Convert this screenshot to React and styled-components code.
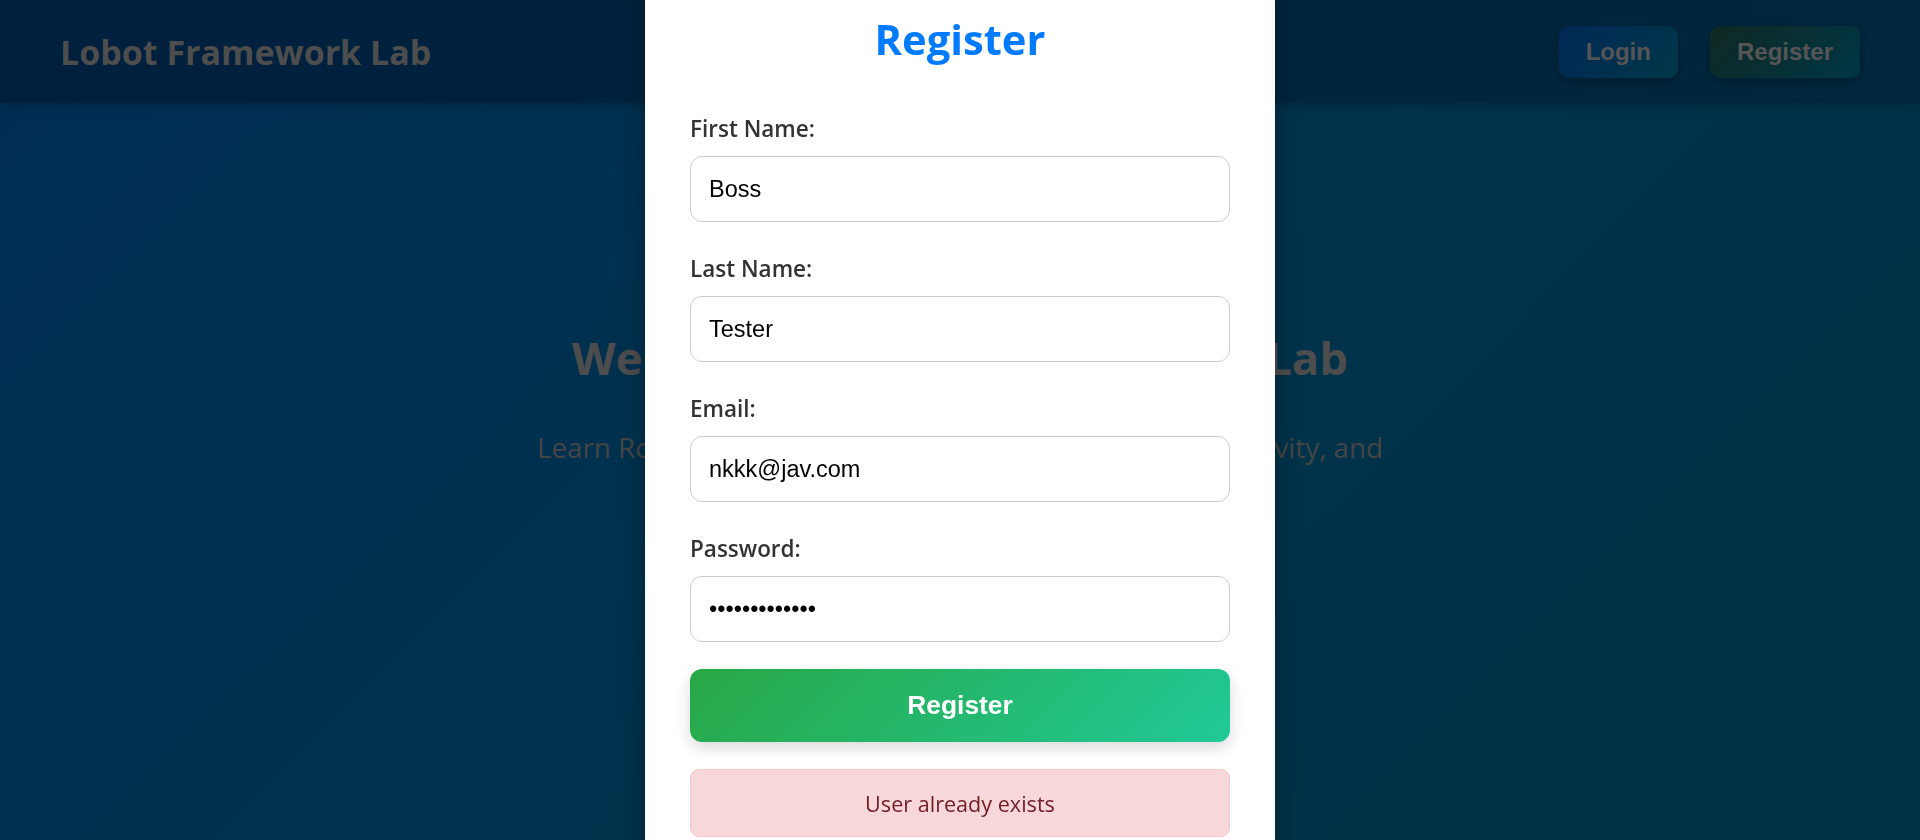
import React from "react";
import styled, { createGlobalStyle } from "styled-components";

const Global = createGlobalStyle`
  html, body {
    margin: 0;
    padding: 0;
    height: 100%;
    overflow: hidden;
  }
  body {
    font-family: "Open Sans", "Noto Sans", sans-serif;
  }
  * { box-sizing: border-box; }
`;

const Page = styled.div`
  min-height: 100vh;
  background: linear-gradient(135deg, #0062b8 0%, #0070aa 50%, #006c95 100%);
`;

const Header = styled.header`
  height: 103px;
  padding: 0 60px;
  display: flex;
  align-items: center;
  justify-content: space-between;
  background: linear-gradient(90deg, #004688 0%, #004f88 50%, #00588a 100%);
  box-shadow: 0 2px 10px rgba(0, 0, 0, 0.2);
`;

const Brand = styled.h1`
  margin: 0;
  font-family: "Open Sans", sans-serif;
  font-size: 34px;
  font-weight: 700;
  color: #acacac;
`;

const Nav = styled.nav`
  display: flex;
  gap: 32px;
`;

const NavButton = styled.button`
  height: 52px;
  padding: 0 27px;
  border: none;
  border-radius: 10px;
  font-family: "Liberation Sans", Arial, sans-serif;
  font-size: 24px;
  font-weight: 700;
  color: #bdbdbd;
  background: ${(p) =>
    p.$variant === "register"
      ? "linear-gradient(135deg, #21594e 0%, #007a9b 100%)"
      : "linear-gradient(135deg, #0059bd 0%, #007aa0 100%)"};
  box-shadow: 0 4px 12px rgba(0, 0, 0, 0.25);
`;

const Hero = styled.section`
  padding-top: 227px;
  display: flex;
  flex-direction: column;
  align-items: center;
  text-align: center;
`;

const HeroTitle = styled.h2`
  margin: 0;
  font-size: 45.5px;
  line-height: 1.2;
  font-weight: 700;
  color: #aaaaaa;
`;

const HeroText = styled.p`
  margin: 41px 0 0;
  font-size: 27.8px;
  line-height: 1.55;
  color: #9a9a9a;
`;

const Overlay = styled.div`
  position: fixed;
  inset: 0;
  background: rgba(0, 0, 0, 0.55);
  display: flex;
  justify-content: center;
  align-items: flex-start;
`;

const Modal = styled.div`
  position: relative;
  width: 630px;
  margin-top: -41px;
  padding: 45px;
  background: #ffffff;
  border-radius: 16px;
  box-shadow: 0 10px 30px rgba(0, 0, 0, 0.3);
`;

const CloseButton = styled.span`
  position: absolute;
  top: 7px;
  right: 25px;
  font-size: 36px;
  line-height: 1;
  color: #aaaaaa;
  cursor: pointer;
`;

const ModalTitle = styled.h2`
  margin: 10px 0 50px;
  text-align: center;
  font-size: 41.7px;
  line-height: 1.2;
  font-weight: 700;
  color: #007bff;
`;

const Form = styled.form`
  display: flex;
  flex-direction: column;
`;

const Field = styled.div`
  display: flex;
  flex-direction: column;
  & + & {
    margin-top: 32px;
  }
`;

const Label = styled.label`
  font-size: 22.5px;
  line-height: 29px;
  font-weight: 600;
  color: #333333;
  margin-bottom: 13px;
`;

const Input = styled.input`
  height: 66px;
  width: 100%;
  padding: 0 18px;
  border: 1px solid #cccccc;
  border-radius: 12px;
  font-family: "Liberation Sans", Arial, sans-serif;
  font-size: 23.5px;
  color: #000000;
  background: #ffffff;
  outline: none;
`;

const SubmitButton = styled.button`
  margin-top: 27px;
  height: 73px;
  width: 100%;
  border: none;
  border-radius: 12px;
  background: linear-gradient(135deg, #28a745 0%, #20c997 100%);
  color: #ffffff;
  font-family: "Liberation Sans", Arial, sans-serif;
  font-size: 26.4px;
  font-weight: 700;
  box-shadow: 0 6px 15px rgba(0, 0, 0, 0.15);
  cursor: pointer;
`;

const ErrorBox = styled.div`
  margin-top: 27px;
  height: 68px;
  display: flex;
  align-items: center;
  justify-content: center;
  background: #f8d7da;
  border: 1px solid #f5c6cb;
  border-radius: 9px;
  color: #721c24;
  font-size: 21.6px;
`;

const fields = [
  { id: "firstName", label: "First Name:", type: "text", value: "Boss" },
  { id: "lastName", label: "Last Name:", type: "text", value: "Tester" },
  { id: "email", label: "Email:", type: "email", value: "nkkk@jav.com" },
  { id: "password", label: "Password:", type: "password", value: "Password12345" },
];

export default function App() {
  return (
    <>
      <Global />
      <Page>
        <Header>
          <Brand>Lobot Framework Lab</Brand>
          <Nav>
            <NavButton $variant="login">Login</NavButton>
            <NavButton $variant="register">Register</NavButton>
          </Nav>
        </Header>
        <Hero>
          <HeroTitle>Welcome to Lobot Framework Lab</HeroTitle>
          <HeroText>
            Learn Robot Framework through hands-on labs, productivity, and
            <br />
            master modern test automation.
          </HeroText>
        </Hero>
      </Page>
      <Overlay>
        <Modal>
          <CloseButton>×</CloseButton>
          <ModalTitle>Register</ModalTitle>
          <Form onSubmit={(e) => e.preventDefault()}>
            {fields.map((f) => (
              <Field key={f.id}>
                <Label htmlFor={f.id}>{f.label}</Label>
                <Input id={f.id} type={f.type} defaultValue={f.value} />
              </Field>
            ))}
            <SubmitButton type="submit">Register</SubmitButton>
            <ErrorBox>User already exists</ErrorBox>
          </Form>
        </Modal>
      </Overlay>
    </>
  );
}
